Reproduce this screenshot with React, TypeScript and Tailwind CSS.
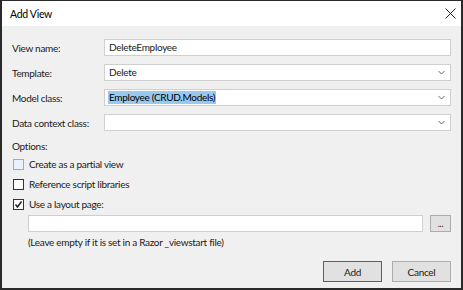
import { useState } from 'react';

// ─── Small pieces ────────────────────────────────────────────────────────────

function Chevron() {
  return (
    <svg width={7} height={5} viewBox="0 0 7 5" className="text-[#6d6d6d]">
      <path d="M0.5 1 L3.5 4 L6.5 1" fill="none" stroke="currentColor" strokeWidth={1} />
    </svg>
  );
}

function ComboBox({ value, selected }: { value?: string; selected?: boolean }) {
  return (
    <div className="flex h-[17px] items-center justify-between border border-[#cfcfcf] bg-white pl-[3px] pr-[5px]">
      {selected ? (
        <span className="bg-[#99c9ef] px-[1px] leading-[13px] text-black">{value}</span>
      ) : (
        <span className="px-[1px] leading-[13px]">{value}</span>
      )}
      <Chevron />
    </div>
  );
}

function CheckBox({ label, checked, focused }: { label: string; checked?: boolean; focused?: boolean }) {
  return (
    <div className="flex h-[20px] items-center gap-[5px]">
      <span
        className={`flex h-[11px] w-[11px] items-center justify-center border ${
          focused ? 'border-[#7eb4ea] bg-[#eaf3fc]' : 'border-[#333333] bg-white'
        }`}
      >
        {checked && (
          <svg width={9} height={9} viewBox="0 0 9 9">
            <path d="M1.5 4.5 L3.5 7 L7.5 1.5" fill="none" stroke="#1a1a1a" strokeWidth={1.4} />
          </svg>
        )}
      </span>
      <span>{label}</span>
    </div>
  );
}

// ─── Dialog ──────────────────────────────────────────────────────────────────

export default function App() {
  const [layoutPath, setLayoutPath] = useState('');

  return (
    <div
      className="flex h-[290px] w-[463px] flex-col border-x-2 border-t border-b-2 border-[#2a2a2a] bg-[#f0f0f0] text-[10px] leading-[14px] tracking-[-0.3px] text-[#1a1a1a]"
      style={{ fontFamily: 'Lato, "Liberation Sans", sans-serif' }}
    >
      {/* Title bar */}
      <div className="flex h-[25px] shrink-0 items-center justify-between bg-white pl-[8px] pr-[5px]">
        <span className="text-[10.5px] text-black">Add View</span>
        <svg width={11} height={11} viewBox="0 0 11 11">
          <path d="M0.5 0.5 L10.5 10.5 M10.5 0.5 L0.5 10.5" stroke="#222" strokeWidth={1} />
        </svg>
      </div>

      {/* Body */}
      <div className="flex flex-1 flex-col pl-[10px] pr-[10px] pt-[13px]">
        <div className="grid grid-cols-[92px_1fr] items-center gap-y-[8px] whitespace-nowrap">
          <span>View name:</span>
          <div className="flex h-[17px] items-center border border-[#cfcfcf] bg-white pl-[4px]">
            <span className="leading-[13px]">DeleteEmployee</span>
          </div>

          <span>Template:</span>
          <ComboBox value="Delete" />

          <span>Model class:</span>
          <ComboBox value="Employee (CRUD.Models)" selected />

          <span>Data context class:</span>
          <ComboBox />
        </div>

        <div className="mt-[8px]">Options:</div>

        <div className="mt-[1px] flex flex-col pl-[1px]">
          <CheckBox label="Create as a partial view" focused />
          <CheckBox label="Reference script libraries" />
          <CheckBox label="Use a layout page:" checked />
        </div>

        <div className="mt-[1px] flex items-center gap-[7px] pl-[16px]">
          <input
            value={layoutPath}
            onChange={(e) => setLayoutPath(e.target.value)}
            className="h-[17px] flex-1 border border-[#cfcfcf] bg-white outline-none"
          />
          <button
            type="button"
            className="flex h-[17px] w-[21px] items-center justify-center border border-[#adadad] bg-[#e1e1e1] text-[9px] leading-none"
          >
            ...
          </button>
        </div>

        <div className="mt-[3px] pl-[16px]">(Leave empty if it is set in a Razor _viewstart file)</div>

        <div className="mt-auto mb-[6px] flex justify-end gap-[10px]">
          <button
            type="button"
            className="h-[21px] w-[59px] border border-[#0078d7] bg-[#e1e1e1] text-[10px]"
          >
            Add
          </button>
          <button
            type="button"
            className="h-[21px] w-[59px] border border-[#adadad] bg-[#e1e1e1] text-[10px]"
          >
            Cancel
          </button>
        </div>
      </div>
    </div>
  );
}
